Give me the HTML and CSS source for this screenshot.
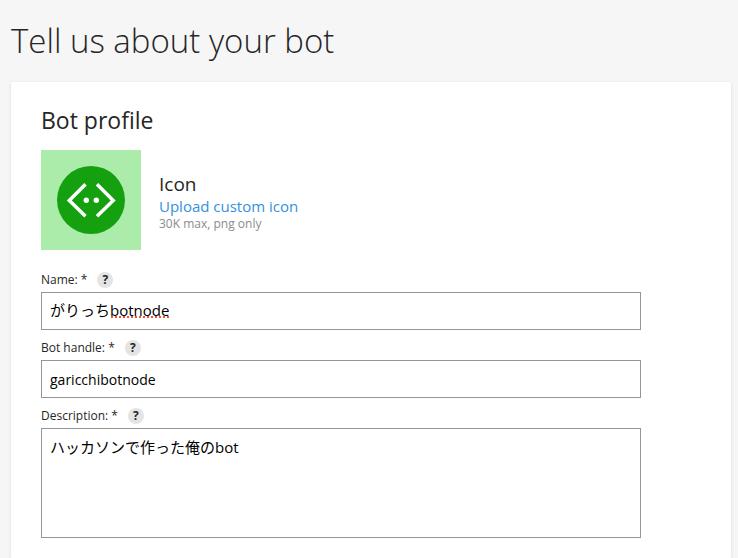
FILE: index.html
```html
<!DOCTYPE html>
<html lang="en">
<head>
<meta charset="utf-8">
<title>Tell us about your bot</title>
<link rel="stylesheet" href="styles.css">
</head>
<body>
<main class="page">
  <h1 class="page-title">Tell us about your bot</h1>
  <form class="card">
    <h2 class="section-title">Bot profile</h2>
    <div class="profile">
      <div class="bot-icon">
        <svg viewBox="0 0 100 100" aria-hidden="true">
          <circle cx="50" cy="50" r="34" fill="#14a00f"/>
          <path d="M44.500 34.200 28.300 50.400 44.500 66.200M56 34.200 72.200 50.400 56 66.200" fill="none" stroke="#fff" stroke-width="3.500"/>
          <circle cx="45.300" cy="50.300" r="2.700" fill="#fff"/>
          <circle cx="55.300" cy="50.300" r="2.700" fill="#fff"/>
        </svg>
      </div>
      <div class="icon-info">
        <h3 class="icon-title">Icon</h3>
        <a class="upload" href="#">Upload custom icon</a>
        <p class="hint">30K max, png only</p>
      </div>
    </div>
    <div class="field">
      <div class="field-head"><label for="name">Name: *</label><button class="help" type="button">?</button></div>
      <div class="control">
        <input class="box" id="name" type="text" lang="ja" value="がりっちbotnode" spellcheck="false">
        <span class="spelling"></span>
      </div>
    </div>
    <div class="field">
      <div class="field-head"><label for="handle">Bot handle: *</label><button class="help" type="button">?</button></div>
      <input class="box" id="handle" type="text" value="garicchibotnode" spellcheck="false">
    </div>
    <div class="field">
      <div class="field-head"><label for="description">Description: *</label><button class="help" type="button">?</button></div>
      <textarea class="box box-tall" id="description" lang="ja" spellcheck="false">ハッカソンで作った俺のbot</textarea>
    </div>
  </form>
</main>
</body>
</html>
```
FILE: styles.css
```css
* {
  box-sizing: border-box;
}

body {
  margin: 0;
  background: #f6f6f6;
  color: #262626;
  font-family: "Open Sans", "Noto Sans CJK JP", sans-serif;
}

h1, h2, h3, p {
  margin: 0;
  font-weight: 400;
}

.page {
  display: flex;
  flex-direction: column;
  min-height: 100vh;
  padding: 0 7px 0 11px;
}

.page-title {
  padding: 16px 0;
  font-size: 33px;
  font-weight: 300;
  line-height: 50px;
}

.card {
  flex: 1;
  padding: 22px 30px 20px;
  background: #fff;
  box-shadow: 0 1px 3px rgba(0, 0, 0, 0.12);
}

.section-title {
  margin-bottom: 14px;
  font-size: 23px;
  line-height: 32px;
}

.profile {
  display: flex;
  align-items: center;
  gap: 18px;
  margin-bottom: 12px;
}

.bot-icon {
  width: 100px;
  height: 100px;
  background: #abecab;
}

.bot-icon svg {
  display: block;
}

.icon-title {
  font-size: 19px;
  line-height: 24px;
}

.upload {
  display: block;
  color: #3490e0;
  font-size: 15px;
  line-height: 20px;
  text-decoration: none;
}

.hint {
  color: #8c8c8c;
  font-size: 12px;
  line-height: 16px;
}

.icon-info {
  padding-top: 3px;
}

.field {
  max-width: 600px;
}

.field-head {
  display: flex;
  align-items: center;
  gap: 10px;
  height: 30px;
  padding-top: 5px;
  font-size: 12px;
}

.help {
  width: 16px;
  height: 16px;
  padding: 0;
  border: 0;
  border-radius: 50%;
  background: #e4e4e4;
  color: #262626;
  font: 700 12px/16px "Open Sans", sans-serif;
}

.control {
  position: relative;
}

.box {
  display: block;
  width: 100%;
  height: 38px;
  padding: 0 8px;
  border: 1px solid #969696;
  border-radius: 0;
  background: #fff;
  color: #000;
  font-family: inherit;
  font-size: 14px;
  line-height: 20px;
}

.box:lang(ja) {
  font-size: 15px;
}

.control .box {
  padding-bottom: 4px;
}

.box-tall {
  height: 110px;
  padding: 8px;
  resize: none;
}

.spelling {
  position: absolute;
  left: 70px;
  top: 24px;
  width: 58px;
  height: 2px;
  background: repeating-linear-gradient(90deg, #f0503c 0 2px, transparent 2px 4px);
}
```
